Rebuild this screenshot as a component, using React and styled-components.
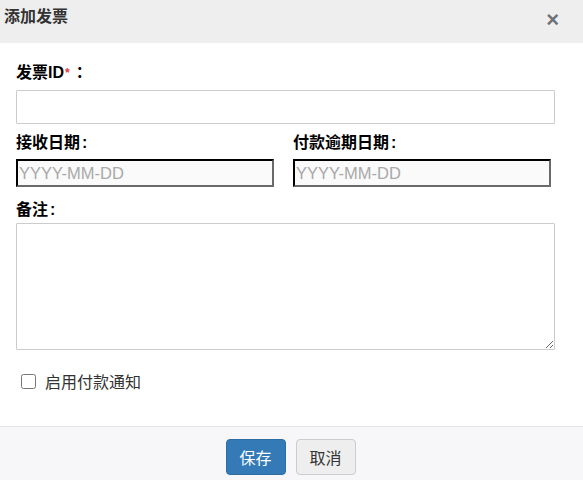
import React from "react";
import styled, { createGlobalStyle } from "styled-components";

const Global = createGlobalStyle`
  html, body { margin: 0; padding: 0; background: #fff; }
  body { font-family: "Liberation Sans", "Noto Sans CJK SC", Arial, sans-serif; color: #333; }
  * { box-sizing: border-box; }
`;

const Dialog = styled.div`
  width: 583px;
  height: 480px;
  display: flex;
  flex-direction: column;
  background: #fff;
  overflow: hidden;
`;

const Header = styled.div`
  height: 43px;
  flex: none;
  background: #eeeeee;
  display: flex;
  align-items: center;
  justify-content: space-between;
  padding: 0 24px 0 4px;
`;

const Title = styled.h4`
  margin: 0;
  font-size: 16px;
  font-weight: bold;
  color: #333;
  line-height: 20px;
  margin-top: -9px;
`;

const Close = styled.button`
  border: 0;
  background: transparent;
  padding: 0;
  font-family: "Liberation Sans", Arial, sans-serif;
  font-size: 22px;
  font-weight: bold;
  line-height: 1;
  color: #6e737a;
  cursor: pointer;
  margin-top: -3px;
`;

const Body = styled.div`
  flex: 1;
  padding: 20px 16px 0 16px;
  display: flex;
  flex-direction: column;
`;

const Group = styled.div`
  display: flex;
  flex-direction: column;
  margin-bottom: ${(p) => p.$mb || 0}px;
`;

const Label = styled.label`
  font-size: 16px;
  font-weight: bold;
  color: #000;
  line-height: 20px;
  margin-bottom: ${(p) => p.$gap || 6}px;
`;

const Colon = styled.span`
  margin-left: 2px;
`;

const Star = styled.span`
  color: #e4393c;
  font-size: 12px;
  margin: 0 6px 0 1px;
  vertical-align: 1px;
`;

const TextInput = styled.input`
  width: 539px;
  height: 34px;
  border: 1px solid #cccccc;
  border-radius: 1px;
  padding: 6px 12px;
  font-size: 14px;
  outline: none;
`;

const Row = styled.div`
  display: grid;
  grid-template-columns: 262px 262px;
  column-gap: 15px;
  margin-bottom: 13px;
`;

const DateInput = styled.input`
  width: 258px;
  height: 28px;
  border: 2px inset;
  border-color: #1e1e1e #6a6a6a #6a6a6a #1e1e1e;
  background: #fafafa;
  padding: 1px 1px;
  font-family: "Liberation Sans", Arial, sans-serif;
  font-size: 16.5px;
  color: #333;
  outline: none;
  &::placeholder { color: #a9a9a9; }
`;

const TextArea = styled.textarea`
  width: 539px;
  height: 127px;
  border: 1px solid #cccccc;
  border-radius: 1px;
  padding: 6px 12px;
  font-size: 14px;
  outline: none;
  resize: vertical;
`;

const CheckRow = styled.label`
  display: flex;
  align-items: center;
  margin-top: 19px;
  padding-left: 5px;
  font-size: 16px;
  color: #333;
  font-weight: normal;
`;

const Check = styled.input`
  width: 15px;
  height: 15px;
  margin: 0 9px 0 0;
`;

const Footer = styled.div`
  flex: none;
  height: 54px;
  border-top: 1px solid #e5e5e5;
  background: #f7f7f9;
  display: flex;
  justify-content: center;
  align-items: flex-start;
  gap: 10px;
  padding-top: 12px;
  padding-right: 2px;
`;

const Button = styled.button`
  width: 60px;
  height: 36px;
  border-radius: 4px;
  border: 1px solid ${(p) => (p.$primary ? "#2e6da4" : "#cccccc")};
  background: ${(p) => (p.$primary ? "#337ab7" : "#eeeeee")};
  color: ${(p) => (p.$primary ? "#fff" : "#333")};
  font-family: "Liberation Sans", "Noto Sans CJK SC", sans-serif;
  font-size: 16px;
  padding: 0;
  cursor: pointer;
`;

export default function App() {
  return (
    <>
      <Global />
      <Dialog>
        <Header>
          <Title>添加发票</Title>
          <Close aria-label="close">×</Close>
        </Header>
        <Body>
          <Group $mb={9}>
            <Label $gap={7}>
              发票ID<Star>*</Star>：
            </Label>
            <TextInput type="text" />
          </Group>
          <Row>
            <Group>
              <Label>接收日期<Colon>:</Colon></Label>
              <DateInput type="text" placeholder="YYYY-MM-DD" />
            </Group>
            <Group>
              <Label>付款逾期日期<Colon>:</Colon></Label>
              <DateInput type="text" placeholder="YYYY-MM-DD" />
            </Group>
          </Row>
          <Group>
            <Label $gap={3}>备注<Colon>:</Colon></Label>
            <TextArea />
          </Group>
          <CheckRow>
            <Check type="checkbox" />
            启用付款通知
          </CheckRow>
        </Body>
        <Footer>
          <Button $primary>保存</Button>
          <Button>取消</Button>
        </Footer>
      </Dialog>
    </>
  );
}
